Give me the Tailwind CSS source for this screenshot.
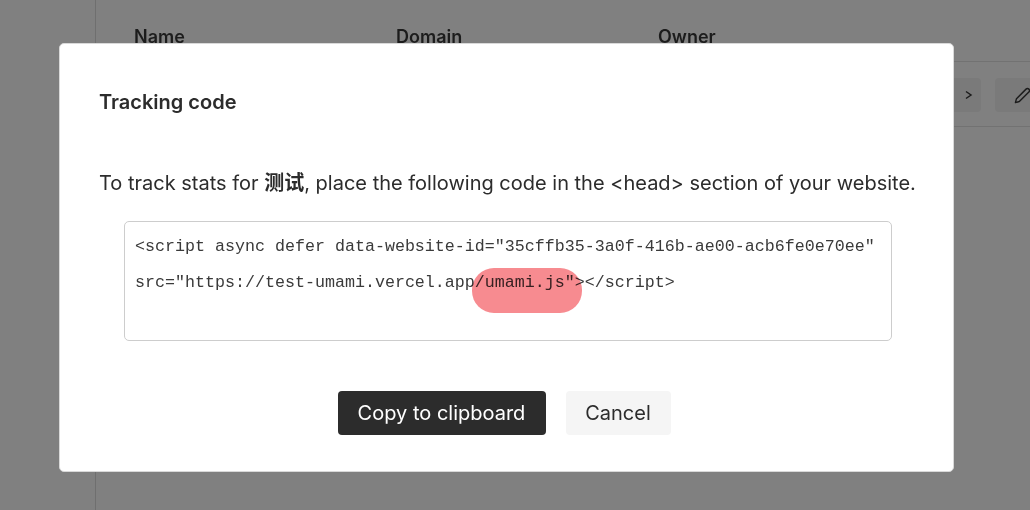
<!DOCTYPE html>
<html lang="en">
<head>
    <meta charset="UTF-8">
    <meta name="viewport" content="width=device-width, initial-scale=1.0">
    <title>Tracking code</title>
    <script src="https://cdn.jsdelivr.net/npm/@tailwindcss/browser@4"></script>
</head>
<body class="relative w-[1030px] h-[510px] overflow-hidden bg-[#808080] font-['Inter','Noto_Sans_CJK_SC',sans-serif] text-[#2c2c2c]">
    <!-- page behind the dialog -->
    <div class="h-full ml-[95px] border-l border-[#6f6f6f] pt-[26px]">
        <div class="grid grid-cols-[262px_262px_262px] pl-[38px] h-[36px] border-b border-[#727272] text-[18px] leading-[22px] font-semibold text-[#1c1c1c]">
            <div>Name</div>
            <div>Domain</div>
            <div>Owner</div>
        </div>
        <div class="flex justify-end gap-[14px] h-[65px] items-center border-b border-[#727272] pt-[2px] pr-0 -mr-[2px]">
            <div class="w-[38px] h-[34px] rounded-[4px] bg-[#7a7a7a] flex items-center justify-center pl-[14px]">
                <svg width="10" height="10" viewBox="0 0 10 10" fill="none" stroke="#1c1c1c" stroke-width="1.5"><path d="M2 1.5 7 5l-5 3.5"/></svg>
            </div>
            <div class="w-[38px] h-[34px] -mr-[1px] rounded-l-[4px] bg-[#7a7a7a] flex items-center pl-[19px]">
                <svg width="17" height="17" viewBox="0 0 24 24" fill="none" stroke="#1c1c1c" stroke-width="2" stroke-linejoin="round"><path d="M17 3a2.8 2.8 0 0 1 4 4L7.5 20.5 2 22l1.5-5.500z"/></svg>
            </div>
        </div>
    </div>
    <div class="absolute left-0 top-0"></div>

    <!-- dialog -->
    <div class="absolute left-[59px] top-[43px] w-[895px] h-[429px] bg-white rounded-[5px] border border-[#d9d9d9] pt-[45px] px-[39px]">
        <h2 class="text-[20px] leading-[26px] font-semibold text-[#2c2c2c]">Tracking code</h2>
        <p class="mt-[55px] text-[20px] leading-[26px] whitespace-nowrap text-[#2c2c2c]">To track stats for <b class="font-bold">测试</b>, place the following code in the &lt;head&gt; section of your website.</p>
        <div class="mt-[25px] ml-[25px] w-[768px] h-[120px] rounded-[5px] border border-[#cdcdcd] pl-[10px] pt-[7px] font-['Liberation_Mono',monospace] text-[16.67px] leading-[36px] font-normal text-[#3a3a3a] whitespace-nowrap">
            <div>&lt;script async defer data-website-id="35cffb35-3a0f-416b-ae00-acb6fe0e70ee"</div>
            <div>src="https://test-umami.vercel.app<span class="relative"><span class="absolute left-[-3px] top-[-5px] w-[110px] h-[45px] rounded-[22px] bg-[#f78b90] mix-blend-multiply"></span>/umami.js"&gt;</span>&lt;/script&gt;</div>
        </div>
        <div class="mt-[50px] flex justify-center gap-[20px] pr-[5px]">
            <button class="w-[208px] h-[44px] rounded-[4px] bg-[#2c2c2c] text-white text-[20px]">Copy to clipboard</button>
            <button class="w-[105px] h-[44px] rounded-[4px] bg-[#f5f5f5] text-[#2c2c2c] text-[20px]">Cancel</button>
        </div>
    </div>
</body>
</html>
